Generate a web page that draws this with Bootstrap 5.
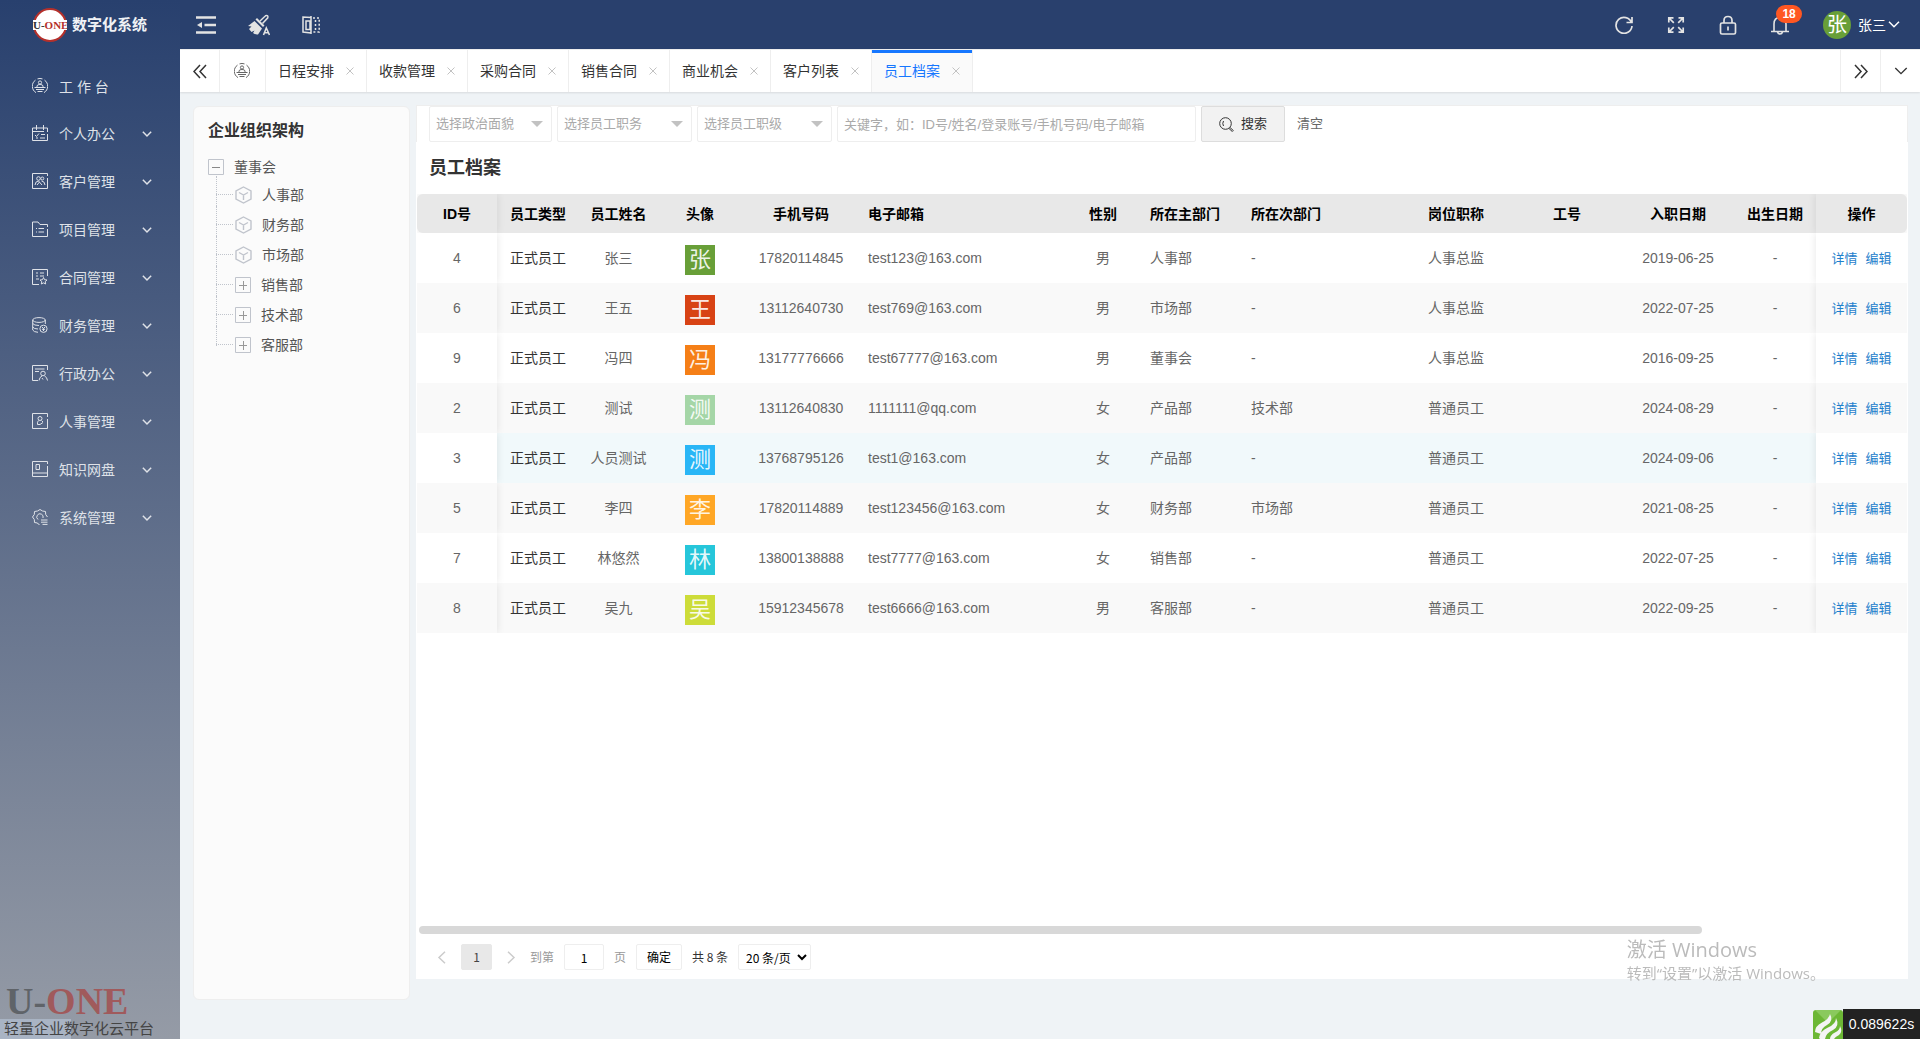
<!DOCTYPE html>
<html lang="zh-CN">
<head>
<meta charset="utf-8">
<meta name="viewport" content="width=device-width, initial-scale=1">
<title>员工档案</title>
<link rel="stylesheet" href="https://cdn.jsdelivr.net/npm/bootstrap@5.3.0/dist/css/bootstrap.min.css">
<style>
body{font:14px/20px "Liberation Sans","Noto Sans CJK SC",sans-serif;color:#666;background:#eff3f6}
a{text-decoration:none;color:inherit}
svg{display:block;flex:none;fill:none;stroke:currentColor}
svg.flat{stroke:none}
.plain{background:none;border:0;padding:0;color:inherit}
.side{width:180px;background:linear-gradient(#28406e,#959ba6);color:#dfe2e8}
.brand{height:49px;padding-left:33px;gap:5px;font-size:15px;font-weight:700;color:#f0f2f5}
.menu{padding-top:15px}
.menu-item{height:48px;padding:0 28px 0 32px;gap:11px;color:inherit}
.menu-item.first{height:46px}
.menu-item svg:first-child{margin-bottom:3px}
.menu-item:hover{color:#fff}
.foot{color:#444;font-size:15px;line-height:20px}
.foot-logo{font:700 38px/36px "Liberation Serif",serif;padding-left:6px;color:#5f6368}
.foot-logo span{color:#a05a5c}
.foot-tag{padding-left:4px;background:linear-gradient(#a9b4c4,#a9b4c4) left/71px 100% no-repeat}
.topbar{height:49px;background:#29406d;color:#e3e3e3;padding:0 20px 0 16px}
.tools{gap:32px}
.count{position:absolute;left:5px;top:-10px;width:26px;height:18px;border-radius:9px;background:#ff5722;color:#fff;font-size:12px;font-weight:700;line-height:18px;text-align:center}
.face{width:28px;height:28px;border-radius:50%;background:#689f38;color:#fff;font-size:20px;line-height:28px;text-align:center}
.tabs{height:43px;background:#fff;border-top:1px solid #eee;box-shadow:0 1px 2px rgba(0,0,0,.1);color:#333;position:relative}
.cell{border-right:1px solid #eee;padding:0 12px;gap:12px}
.cell.home{padding:0 15px 0 14px;color:#666}
.cell.active{background:#fafafa;color:#1677ff;box-shadow:inset 0 3px #1677ff}
.cell svg.x{color:#c2c2c2}
.plain.arrow{width:40px}
.plain.cell{border-right:1px solid #eee}
.plain.cell-r{border-left:1px solid #eee}
.work{padding:14px 12px 39px 13px;gap:6px}
.tree{width:217px;background:#fbfbfb;border:1px solid #eee;border-radius:6px;padding:14px;color:#555}
.tree h2{font-size:16px;line-height:20px;font-weight:700;color:#333;margin:0 0 13px}
.root{height:26px;gap:10px}
.kids{margin:0 0 0 8px;padding:0;list-style:none}
.kids li{height:30px;position:relative;display:flex;align-items:center;gap:10px;padding-left:19px}
.kids li::before{content:"";position:absolute;left:0;top:-4px;height:30px;border-left:1px dotted #c0c4cc}
.kids li:last-child::before{height:20px}
.kids li::after{content:"";position:absolute;left:0;top:14px;width:17px;border-top:1px dotted #c0c4cc}
.tree svg{color:#c0c4cc}
.panel{background:#fff;margin-bottom:21px;margin-top:-1px;min-width:0}
.filter{border:1px solid #eee;border-bottom:0;padding-left:12px;gap:5px}
.sel{position:relative}
.sel::after{content:"";position:absolute;right:9px;top:15px;border:6px solid transparent;border-top-color:#c2c2c2;pointer-events:none}
.box{height:36px;border:1px solid #eee;border-radius:2px;background:#fff;color:#aaa;font-size:13px;padding:0 6px;width:135px;appearance:none}
.box.narrow{width:123px}
.box.wide{width:359px}
.box::placeholder{color:#aaa}
.find{width:84px;height:36px;background:#f2f2f2;border:1px solid #ddd;border-radius:2px;color:#333;font-size:13px;gap:7px}
.clear{font-size:13px;margin-left:7px}
.panel h1{font-size:18px;line-height:24px;font-weight:700;color:#333;margin:14px 13px}
.staff{table-layout:fixed;width:calc(100% - 2px);margin:0 1px;border-collapse:separate;border-spacing:0;text-align:center}
.staff th,.staff td{padding:0 8px;height:50px;white-space:nowrap}
.staff th{background:#e8e8e8;height:39px;color:#000}
.staff .l{text-align:left}
.staff td{background:#fff}
.staff tr:nth-child(even) td{background:#f9f9f9}
.staff tr.over td:not(.fix){background:#f1f9fb}
.staff td:nth-child(2){color:#333}
.staff th:first-child{border-radius:6px 0 0 6px}
.staff th:last-child{border-radius:0 6px 6px 0}
.staff .fix{position:sticky;z-index:1;box-shadow:0 0 8px rgba(0,0,0,.1)}
.staff .fix:first-child{left:0;clip-path:inset(0 -10px 0 0)}
.staff .fix:last-child{right:0;clip-path:inset(0 0 0 -10px)}
.staff td a{color:#1e80cc;font-size:13px;margin:0 4px}
.pic{display:block;width:30px;height:30px;margin:4px auto 0;font-size:22px;line-height:30px;color:rgba(255,255,255,.9)}
.bar{height:8px;border-radius:4px;background:#d8d8d8;margin:0 206px 10px 3px}
.pager{padding:0 21px 9px;font-size:12px;color:#999;line-height:26px;font-family:"Noto Sans CJK SC",sans-serif}
.pager .step{color:#ccc}
.pager .pg{height:26px;border:1px solid #eee;border-radius:2px;background:#fff;color:#000;font-size:12px;line-height:24px;padding:0;text-align:center}
.pager .cur{width:31px;background:#e8e8e8;border-color:#e8e8e8;color:#444;margin:0 15px}
.pager label{margin-left:14px}
.pager .num{width:40px;margin:0 10px}
.pager .ok{width:46px;margin:0 10px}
.pager .total{color:#333;margin-right:10px}
.pager .size{width:73px;text-align:left;padding-left:3px}
.mark-os{position:fixed;right:95px;bottom:56px;color:#bbb;font:15px/20px "Open Sans","Noto Sans CJK SC",sans-serif;pointer-events:none;z-index:3}
.mark-os b{display:block;font-size:20px;line-height:27px;font-weight:400}
.trace{position:fixed;right:0;bottom:0;height:30px;z-index:3}
.trace span{background:#222;color:#fff;width:77px;line-height:30px;text-align:center}
</style>
</head>
<body>
<svg width="0" height="0" class="position-absolute">
<symbol id="desk" viewBox="0 0 16 16"><path d="M4 14.6A7.4 7.4 0 0 1 3.500 2.100M12.500 2.100A7.400 7.400 0 0 1 12 14.600M5.500 .9A7.400 7.400 0 0 1 10.500 .9"/><circle cx="8" cy="4.500" r="1.600"/><path d="M5 9V8Q5 6.500 8 6.500T11 8V9M2.500 9.500H13.500M4 11.500H12M5.500 13.500H10.500"/></symbol>
<symbol id="cal" viewBox="0 0 16 16"><path d="M.5 7V3H15.500V7M.5 6V15.500H15.500V9M4.500 0V5M11.500 0V5M.5 6.500H12M3 10L4.500 11.500L7 8.500M9 9.500H13M4 13H6M8 13H13"/></symbol>
<symbol id="cust" viewBox="0 0 16 16"><path d="M15.500 3V.5H.5V15.500H15.500V5"/><circle cx="6.500" cy="5.500" r="1.800"/><circle cx="10.300" cy="5.500" r="1.500"/><path d="M3 12Q3.500 8 6.500 8L10 12M5 12L7.500 9M9.500 8Q12.500 8 13 12"/></symbol>
<symbol id="proj" viewBox="0 0 16 16"><path d="M.5 15.500V1H6L8 3.500H15.500V6M.5 15.500H15.500V8M4 7.500H5M6.500 7.500H12M4 11H5M6.500 11H12"/></symbol>
<symbol id="cont" viewBox="0 0 16 16"><path d="M15.500 7V.5H.5V15.500H7M4 4H6M8 4H12M4 7H6M8 7H12M4 10H7M11.500 8.500L12.500 10.700L15 11L13.200 12.700L13.700 15L11.500 13.900L9.300 15L9.800 12.700L8 11L10.500 10.700Z"/></symbol>
<symbol id="fin" viewBox="0 0 16 16"><ellipse cx="7" cy="3" rx="6.300" ry="2.400"/><path d="M.7 3V13Q1.500 15 6 15.300M13.300 3V7M.7 6.500Q2 8.500 7 8.500M.7 10Q2 12 6 12"/><circle cx="11.500" cy="11.800" r="3.600"/><path d="M10 10L11.500 11.500L13 10M11.500 11.500V14M10 12.300H13"/></symbol>
<symbol id="adm" viewBox="0 0 16 16"><path d="M15.500 5V.5H.5V15.500H6M3 4H12.500M3 6.500H7"/><circle cx="11" cy="8.500" r="2.300"/><path d="M7 15.500Q7.500 12 10 11M12.500 11Q15 12 15.500 15.500M10 13L11 14.500"/></symbol>
<symbol id="hr" viewBox="0 0 16 16"><path d="M15.500 4V.5H.5V15.500H15.500V6"/><circle cx="8" cy="5.500" r="2"/><path d="M6.500 7.500Q5 9 5.500 11.500H8M9.500 7.500L11 9M8 11.500L11 9.500"/></symbol>
<symbol id="disk" viewBox="0 0 16 16"><path d="M15.500 3V.5H.5V15.500H15.500V5M.5 12H15.500M4 3.500H7.500V8.500H4Z"/></symbol>
<symbol id="sys" viewBox="0 0 16 16"><path d="M7.500 15.500Q6 15.500 5.500 14L2.500 13.500L2.300 10.500L.5 8L2.300 5.500L2.500 2.500L5.500 2Q8-1 10.500 2L13.500 2.500L13.700 5.500L15.500 8M6 10.500A3.200 3.200 0 1 1 11 9M9 11H15.500M9 13.200H15.500M10.500 15.400H15.500"/></symbol>
<symbol id="dn" viewBox="0 0 12 7"><path d="M1 .8L6 5.800L11 .8"/></symbol>
<symbol id="x" viewBox="0 0 8 8"><path d="M.5 .5L7.500 7.500M7.500 .5L.5 7.500"/></symbol>
<symbol id="cube" viewBox="0 0 17 18"><path d="M8.500 1L16 5V13L8.500 17L1 13V5ZM4 6.500L8.500 9L13 6.500M8.500 9V14" stroke-width="1.400"/></symbol>
<symbol id="plus" viewBox="0 0 16 16"><path d="M.5 .5H15.500V15.500H.5Z"/><path d="M4 8.500H12M8.500 4V13" stroke="#999"/></symbol>
<symbol id="minus" viewBox="0 0 16 16"><path d="M.5 .5H15.500V15.500H.5Z"/><path d="M4 8.500H12" stroke="#888"/></symbol>
</svg>

<div class="d-flex min-vh-100">
<aside class="side d-flex flex-column flex-shrink-0">
  <div class="brand d-flex align-items-center">
    <svg class="flat" width="34" height="34" viewBox="0 0 34 34"><circle cx="17" cy="17" r="16" fill="#fff" stroke="#b5302b" stroke-width="2"/><path d="M0 12H34V22H0Z" fill="#fff"/><text x="0" y="21" font-family="Liberation Serif,serif" font-weight="700" font-size="11" fill="#333">U-<tspan fill="#b5302b">ONE</tspan></text></svg>
    <span>数字化系统</span>
  </div>
  <nav class="menu flex-grow-1" id="menu">
    <a href="#" class="menu-item first d-flex align-items-center"><svg width="16" height="16"><use href="#desk"/></svg>工 作 台</a>
  </nav>
  <div class="foot">
    <div class="foot-logo">U-<span>ONE</span></div>
    <div class="foot-tag">轻量企业数字化云平台</div>
  </div>
</aside>

<div class="flex-grow-1 d-flex flex-column overflow-hidden">
  <header class="topbar d-flex align-items-center justify-content-between">
    <div class="tools d-flex align-items-center">
      <button class="plain" aria-label="收起菜单"><svg width="20" height="18" viewBox="0 0 20 18"><path d="M0 1.500H20M8.500 9H20M0 16.500H20" stroke-width="2.400"/><path d="M1 9L6 6V12Z" fill="currentColor" stroke="none"/></svg></button>
      <button class="plain" aria-label="主题"><svg width="22" height="22" viewBox="0 0 22 22"><g fill="currentColor" stroke="none"><path d="M0 12L6.500 7L14 14.500L10 20.500Q8 21 5 19L6.500 16.500L3.500 18L1 15L3.500 12.500Z"/><path d="M7.500 5.500L9 4L16.500 11.500L15 13Z"/></g><path d="M12 7L17.500 1.800Q20.500 .8 19.800 3.800L14.500 9.500" stroke-width="1.500"/><path d="M15.500 21L18.300 14L21.500 21M16.500 18.800H20.500" stroke-width="1.600"/></svg></button>
      <button class="plain" aria-label="布局"><svg width="18" height="18" viewBox="0 0 18 18"><path d="M9 1.500L1 1V16L9 17M4 5H8V13.500H4ZM9 0V18" stroke-width="1.500"/><path d="M11 2H17.200V16H11M13.500 4V14" stroke-width="1.500" stroke-dasharray="2 2"/></svg></button>
    </div>
    <div class="d-flex align-items-center">
      <div class="d-flex align-items-center" style="gap:34px">
        <button class="plain" aria-label="刷新"><svg width="18" height="18" viewBox="0 0 18 18" stroke-width="1.700"><path d="M16.500 6.500A8 8 0 1 0 17 10M17 1V6.500H11.500"/></svg></button>
        <button class="plain" aria-label="全屏"><svg width="18" height="18" viewBox="0 0 18 18" stroke-width="1.700"><path d="M1.800 6.500V1.800H6.500M2 2L6.800 6.800M11.500 1.800H16.200V6.500M16 2L11.200 6.800M1.800 11.500V16.200H6.500M2 16L6.800 11.200M11.500 16.200H16.200V11.500M16 16L11.200 11.200"/></svg></button>
        <button class="plain" aria-label="锁屏"><svg width="18" height="20" viewBox="0 0 18 20" stroke-width="1.700"><rect x="1.500" y="8" width="15" height="11" rx="1.500"/><path d="M5 8V5.500Q5 1.500 9 1.500T13 5.500V8M9 11.500V15.500"/></svg></button>
        <button class="plain position-relative" aria-label="消息"><svg width="18" height="20" viewBox="0 0 18 20" stroke-width="1.600"><path d="M3 16V9Q3 2.500 9 2.500T15 9V16M0 16.500H18M6.500 17Q7 19 9 19T11.500 17"/></svg><span class="count">18</span></button>
      </div>
      <a href="#" class="d-flex align-items-center text-white" style="margin-left:34px;gap:7px"><span class="face">张</span><span class="d-flex align-items-center" style="gap:2px">张三<svg width="12" height="7" stroke-width="1.500"><use href="#dn"/></svg></span></a>
    </div>
  </header>

  <div class="tabs d-flex">
    <button class="plain arrow cell d-flex align-items-center justify-content-center" aria-label="向左"><svg width="14" height="15" viewBox="0 0 14 15" stroke-width="1.500"><path d="M7 1L1 7.500L7 14M13 1L7 7.500L13 14"/></svg></button>
    <a href="#" class="cell home d-flex align-items-center" aria-label="首页"><svg width="16" height="16"><use href="#desk"/></svg></a>
    <div class="d-flex" id="tabs"></div>
    <div class="d-flex ms-auto">
      <button class="plain arrow cell-r d-flex align-items-center justify-content-center" aria-label="向右"><svg width="14" height="15" viewBox="0 0 14 15" stroke-width="1.500"><path d="M1 1L7 7.500L1 14M7 1L13 7.500L7 14"/></svg></button>
      <button class="plain arrow cell-r d-flex align-items-center justify-content-center" aria-label="更多"><svg width="14" height="8" stroke-width="1.200"><use href="#dn"/></svg></button>
    </div>
  </div>

  <div class="work d-flex flex-grow-1">
    <section class="tree flex-shrink-0">
      <h2>企业组织架构</h2>
      <div class="root d-flex align-items-center"><svg width="16" height="16"><use href="#minus"/></svg>董事会</div>
      <ul class="kids" id="kids"></ul>
    </section>

    <main class="panel flex-grow-1 d-flex flex-column">
      <form class="filter d-flex align-items-center">
        <div class="sel"><select class="box narrow" aria-label="政治面貌"><option>选择政治面貌</option></select></div>
        <div class="sel"><select class="box" aria-label="员工职务"><option>选择员工职务</option></select></div>
        <div class="sel"><select class="box" aria-label="员工职级"><option>选择员工职级</option></select></div>
        <input class="box wide" aria-label="关键字" placeholder="关键字，如：ID号/姓名/登录账号/手机号码/电子邮箱">
        <button type="button" class="find d-flex align-items-center justify-content-center"><svg width="15" height="15" viewBox="0 0 15 15"><circle cx="6.500" cy="6.500" r="5.800"/><path d="M4.500 9Q3 6.500 4.500 4M11 10.500L14.300 13.500L13.300 14.500L10 11.500"/></svg>搜索</button>
        <button type="reset" class="plain clear">清空</button>
      </form>
      <h1>员工档案</h1>
      <table class="staff">
        <colgroup><col style="width:80px"><col style="width:82px"><col style="width:79px"><col style="width:84px"><col style="width:118px"><col style="width:204px"><col style="width:78px"><col style="width:101px"><col style="width:157px"><col style="width:112px"><col style="width:110px"><col style="width:112px"><col style="width:82px"><col style="width:91px"></colgroup>
        <thead><tr><th class="fix">ID号</th><th>员工类型</th><th>员工姓名</th><th>头像</th><th>手机号码</th><th class="l">电子邮箱</th><th>性别</th><th class="l">所在主部门</th><th class="l">所在次部门</th><th>岗位职称</th><th>工号</th><th>入职日期</th><th>出生日期</th><th class="fix">操作</th></tr></thead>
        <tbody id="rows"></tbody>
      </table>
      <div class="mt-auto">
        <div class="bar"></div>
        <div class="pager d-flex align-items-center">
          <button class="plain step" aria-label="上一页"><svg width="9" height="13" viewBox="0 0 9 13" stroke-width="1.500"><path d="M8 .7L2 6.500L8 12.300"/></svg></button>
          <button class="pg cur">1</button>
          <button class="plain step" aria-label="下一页"><svg width="9" height="13" viewBox="0 0 9 13" stroke-width="1.500"><path d="M1 .7L7 6.500L1 12.300"/></svg></button>
          <label for="pageNo">到第</label><input id="pageNo" class="pg num" value="1">页
          <button class="pg ok">确定</button>
          <span class="total">共 8 条</span>
          <select class="pg size" aria-label="每页条数"><option>20 条/页</option></select>
        </div>
      </div>
    </main>
  </div>
</div>
</div>

<div class="mark-os"><b>激活 Windows</b>转到“设置”以激活 Windows。</div>
<div class="trace d-flex"><svg class="flat" width="30" height="30" viewBox="0 0 30 30"><rect y="1" width="30" height="32" rx="3" fill="#6cb735"/><path d="M2 1H28L15 14Z" fill="#8ac95d"/><path d="M2 23Q2 17 9 13.500T17 5Q21 12 14 16Q8 19 8 25ZM6 29Q7 22 15 18.500T23 9Q27 17 20 21Q13 24 12 30H7ZM17 30Q17 26 22 23.500T27 17Q30 23 26 26Q22 28 21 30Z" fill="#f4f4f4"/></svg><span>0.089622s</span></div>

<script src="https://cdn.jsdelivr.net/npm/bootstrap@5.3.0/dist/js/bootstrap.bundle.min.js"></script>
<script>
const put = (id, html) => document.getElementById(id).insertAdjacentHTML('beforeend', html);
put('menu', [['cal','个人办公'],['cust','客户管理'],['proj','项目管理'],['cont','合同管理'],['fin','财务管理'],['adm','行政办公'],['hr','人事管理'],['disk','知识网盘'],['sys','系统管理']]
  .map(([i,t]) => `<a href="#" class="menu-item d-flex align-items-center"><svg width="16" height="16"><use href="#${i}"/></svg>${t}<svg class="ms-auto" width="10" height="6" stroke-width="1.800"><use href="#dn"/></svg></a>`).join(''));
put('tabs', ['日程安排','收款管理','采购合同','销售合同','商业机会','客户列表','员工档案']
  .map(t => `<a href="#" class="cell d-flex align-items-center${t === '员工档案' ? ' active' : ''}">${t}<svg class="x" width="8" height="8"><use href="#x"/></svg></a>`).join(''));
put('kids', [['人事部',0],['财务部',0],['市场部',0],['销售部',1],['技术部',1],['客服部',1]]
  .map(([t,p]) => `<li><svg width="${p ? 16 : 17}" height="${p ? 16 : 18}"><use href="#${p ? 'plus' : 'cube'}"/></svg>${t}</li>`).join(''));
put('rows', [
  [4,'张三','张','#689f38','17820114845','test123@163.com','男','人事部','-','人事总监','2019-06-25'],
  [6,'王五','王','#d84315','13112640730','test769@163.com','男','市场部','-','人事总监','2022-07-25'],
  [9,'冯四','冯','#f57f17','13177776666','test67777@163.com','男','董事会','-','人事总监','2016-09-25'],
  [2,'测试','测','#a5d6a7','13112640830','1111111@qq.com','女','产品部','技术部','普通员工','2024-08-29'],
  [3,'人员测试','测','#29b6f6','13768795126','test1@163.com','女','产品部','-','普通员工','2024-09-06'],
  [5,'李四','李','#ffa726','17820114889','test123456@163.com','女','财务部','市场部','普通员工','2021-08-25'],
  [7,'林悠然','林','#26c6da','13800138888','test7777@163.com','女','销售部','-','普通员工','2022-07-25'],
  [8,'吴九','吴','#cddc39','15912345678','test6666@163.com','男','客服部','-','普通员工','2022-09-25']
].map(r => `<tr class="${r[0] === 3 ? 'over' : ''}"><td class="fix">${r[0]}</td><td>正式员工</td><td>${r[1]}</td><td><span class="pic" style="background:${r[3]}">${r[2]}</span></td><td>${r[4]}</td><td class="l">${r[5]}</td><td>${r[6]}</td><td class="l">${r[7]}</td><td class="l">${r[8]}</td><td>${r[9]}</td><td></td><td>${r[10]}</td><td>-</td><td class="fix"><a href="#">详情</a><a href="#">编辑</a></td></tr>`).join(''));
</script>
</body>
</html>
